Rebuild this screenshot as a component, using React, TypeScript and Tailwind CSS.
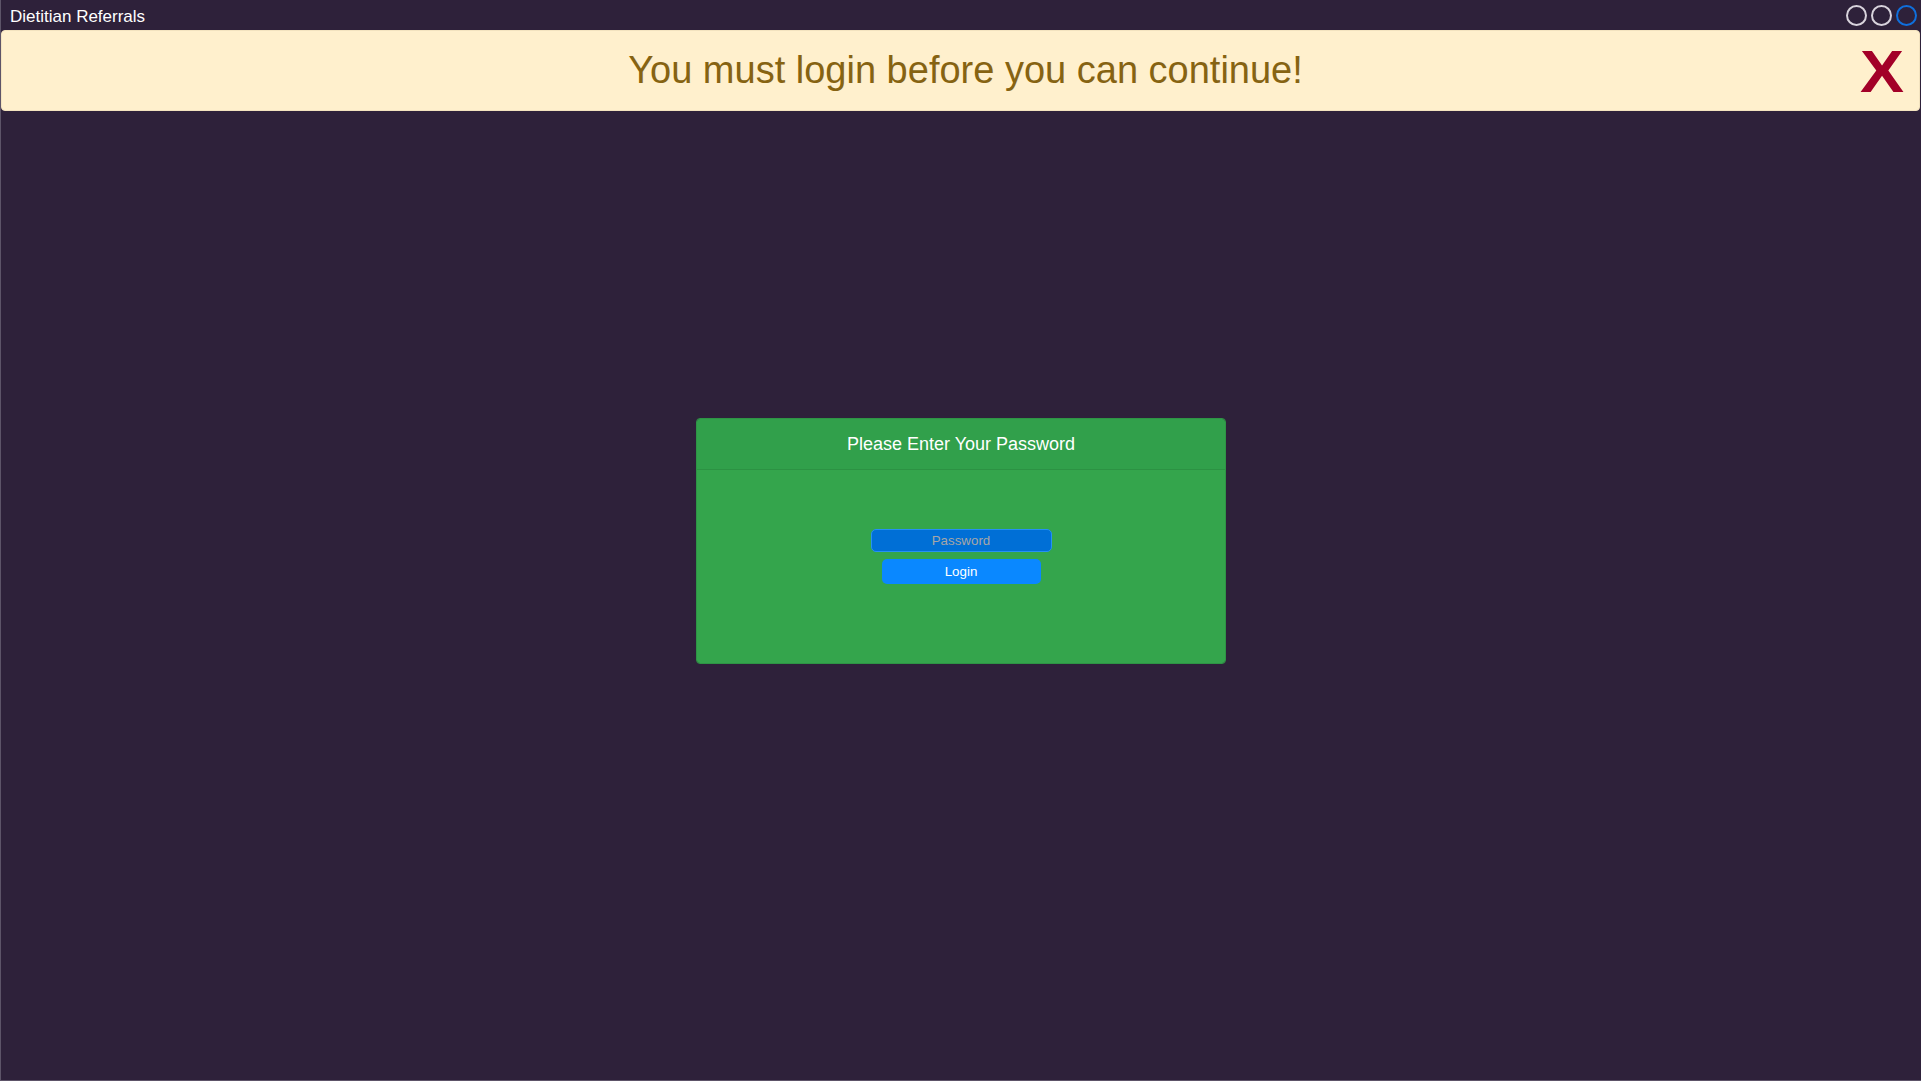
export default function App() {
  return (
    <div className="h-[1081px] w-full flex flex-col bg-[#2e213a] border-l border-b border-[#5d5468] font-['Liberation_Sans',Arial,sans-serif] overflow-hidden">
      {/* title bar */}
      <div className="h-[30px] shrink-0 flex items-center justify-between pl-[9px] pr-[4px]">
        <span className="text-white text-[17px] mt-[3px]">Dietitian Referrals</span>
        <div className="flex items-center gap-[4px]">
          <div className="w-[21px] h-[21px] rounded-full border-2 border-[#d8d3dc]" />
          <div className="w-[21px] h-[21px] rounded-full border-2 border-[#d8d3dc]" />
          <div className="w-[21px] h-[21px] rounded-full border-2 border-[#0f6fdc]" />
        </div>
      </div>

      {/* warning banner */}
      <div className="relative h-[81px] shrink-0 mr-[1px] flex items-center justify-center rounded-[4px] border border-[#f3e3bf] bg-[#fff0cd]">
        <span className="text-[38px] text-[#866312] pl-[10px]">You must login before you can continue!</span>
        <button className="absolute right-[17px] top-[11px] text-[60px] leading-none font-bold text-[#a30028] scale-x-110">X</button>
      </div>

      {/* main */}
      <div className="flex-1 flex justify-center">
        <div className="mt-[307px] w-[530px] h-[246px] flex flex-col rounded-[4px] border border-[#2e9445] overflow-hidden">
          <div className="h-[51px] shrink-0 flex items-center justify-center bg-[#31a04b] border-b border-[#2c9243]">
            <span className="text-white text-[18px]">Please Enter Your Password</span>
          </div>
          <div className="flex-1 flex flex-col items-center pt-[59px] bg-[#34a54c]">
            <input
              type="password"
              placeholder="Password"
              className="w-[181px] h-[23px] rounded-[5px] border border-[#2590f5] bg-[#006fd6] text-center text-[13.33px] text-white placeholder:text-[#a6a6a6] outline-none"
            />
            <button className="mt-[7px] w-[159px] h-[25px] rounded-[5px] bg-[#0a88ff] text-white text-[13.33px]">Login</button>
          </div>
        </div>
      </div>
    </div>
  )
}
